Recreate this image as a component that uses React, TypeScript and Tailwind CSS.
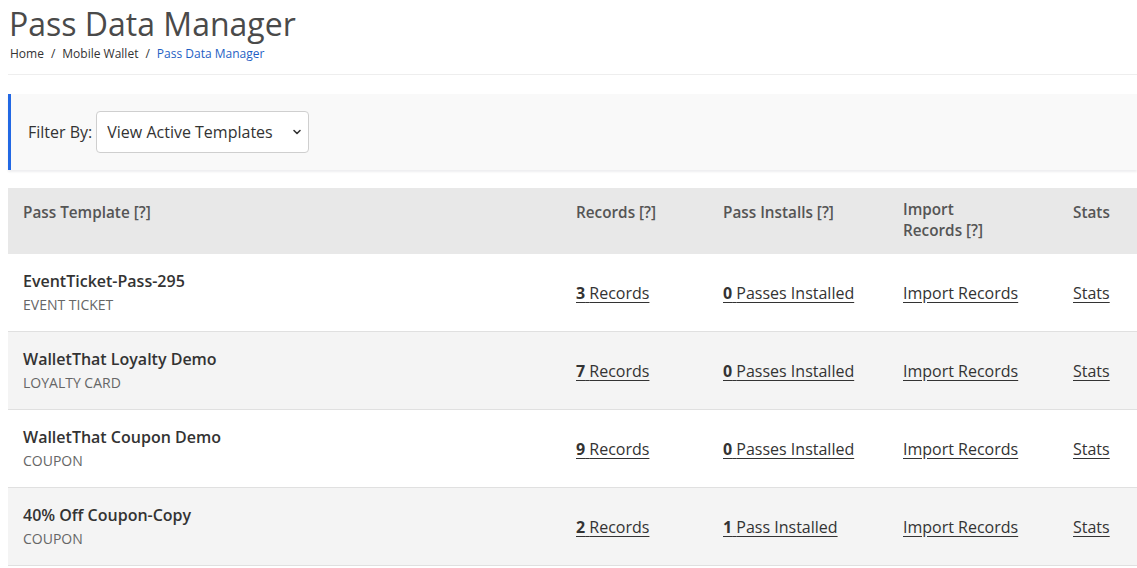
import React from 'react'

type Row = {
  name: string
  kind: string
  records: number
  installs: number
}

const rows: Row[] = [
  { name: 'EventTicket-Pass-295', kind: 'Event Ticket', records: 3, installs: 0 },
  { name: 'WalletThat Loyalty Demo', kind: 'Loyalty Card', records: 7, installs: 0 },
  { name: 'WalletThat Coupon Demo', kind: 'Coupon', records: 9, installs: 0 },
  { name: '40% Off Coupon-Copy', kind: 'Coupon', records: 2, installs: 1 },
]

function CountLink({ n, label }: { n: number; label: string }) {
  return (
    <a href="#" className="text-[#333] underline underline-offset-[3px] decoration-1">
      <span className="font-bold">{n}</span> {label}
    </a>
  )
}

export default function App() {
  return (
    <div className="min-h-screen bg-white pl-2 text-[#333]" style={{ fontFamily: '"Open Sans", "Liberation Sans", sans-serif' }}>
      {/* Page heading */}
      <h1 className="ml-[1px] pt-[4px] text-[32px] leading-[40px] font-normal text-[#4a4a4a]">Pass Data Manager</h1>
      <nav className="ml-[2px] mt-[2px] flex items-center gap-[7px] text-[12px] leading-[16px] text-[#333]">
        <a href="#">Home</a>
        <span>/</span>
        <a href="#">Mobile Wallet</a>
        <span>/</span>
        <span className="text-[#1f5fc4]">Pass Data Manager</span>
      </nav>
      <div className="mt-[12px] h-px bg-[#eeeeee]" />

      {/* Filter panel */}
      <div className="mt-[19px] flex items-center gap-[4px] border-l-[3px] border-[#2268e4] bg-[#f9f9f9] py-[17px] pl-[17px] shadow-[0_2px_2px_rgba(0,0,40,0.07)]">
        <label className="text-[16px] leading-[20px] text-[#333]">Filter By:</label>
        <div className="relative">
          <select className="h-[42px] w-[213px] appearance-none rounded-[4px] border border-[#cfcfcf] bg-white pl-[10px] text-[16px] text-[#333] outline-none">
            <option>View Active Templates</option>
          </select>
          <svg className="pointer-events-none absolute right-[7px] top-[16px]" width="10" height="10" viewBox="0 0 10 10" fill="none" stroke="#333" strokeWidth="1.6" strokeLinecap="round" strokeLinejoin="round">
            <path d="M2 3.5l3 3 3-3" />
          </svg>
        </div>
      </div>

      {/* Templates table */}
      <table className="mt-[18px] w-[1129px] table-fixed border-collapse">
        <colgroup>
          <col className="w-[553px]" />
          <col className="w-[147px]" />
          <col className="w-[180px]" />
          <col className="w-[170px]" />
          <col className="w-[79px]" />
        </colgroup>
        <thead>
          <tr className="h-[66px] bg-[#e8e8e8] text-left align-top text-[15.3px] text-[#555]">
            <th className="px-[15px] pt-[14px] font-semibold leading-[21px]">Pass Template [?]</th>
            <th className="px-[15px] pt-[14px] font-semibold leading-[21px]">Records [?]</th>
            <th className="px-[15px] pt-[14px] font-semibold leading-[21px]">Pass Installs [?]</th>
            <th className="px-[15px] pt-[11px] font-semibold leading-[21px]">
              Import
              <br />
              Records [?]
            </th>
            <th className="px-[15px] pt-[14px] font-semibold leading-[21px]">Stats</th>
          </tr>
        </thead>
        <tbody className="text-[16px]">
          {rows.map((r, i) => (
            <tr key={r.name} className={`border-b border-[#e0e0e0] align-middle ${i % 2 ? 'bg-[#f4f4f4]' : 'bg-white'}`}>
              <td className="px-[15px] py-[16px]">
                <div className="leading-[22px] font-semibold text-[#333]">{r.name}</div>
                <div className="mt-[3px] text-[14px] leading-[20px] uppercase text-[#666]">{r.kind}</div>
              </td>
              <td className="px-[15px]">
                <CountLink n={r.records} label="Records" />
              </td>
              <td className="px-[15px]">
                <CountLink n={r.installs} label={r.installs === 1 ? 'Pass Installed' : 'Passes Installed'} />
              </td>
              <td className="px-[15px]">
                <a href="#" className="text-[#333] underline underline-offset-[3px]">Import Records</a>
              </td>
              <td className="px-[15px]">
                <a href="#" className="text-[#333] underline underline-offset-[3px]">Stats</a>
              </td>
            </tr>
          ))}
        </tbody>
      </table>
    </div>
  )
}
